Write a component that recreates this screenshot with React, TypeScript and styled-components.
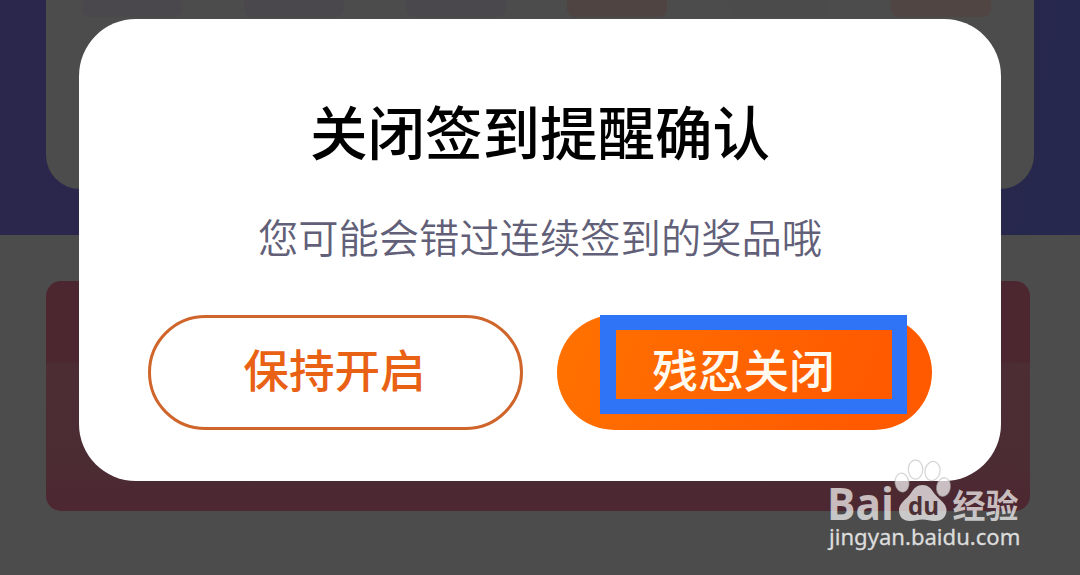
import React from "react";
import styled, { createGlobalStyle } from "styled-components";

const DimmedPageColor = "#4c4c4c";
const FontStack = `"Noto Sans CJK SC", "Noto Sans", sans-serif`;

const GlobalStyle = createGlobalStyle`
  * {
    box-sizing: border-box;
  }

  body {
    margin: 0;
    background: ${DimmedPageColor};
    font-family: ${FontStack};
    overflow: hidden;
  }
`;

const Page = styled.div`
  position: relative;
  width: 1080px;
  height: 575px;
  overflow: hidden;
  background: ${DimmedPageColor};
`;

const Header = styled.div`
  height: 235px;
  padding: 0 46px;
  background: linear-gradient(100deg, #2a264c 0%, #2a264c 55%, #27284d 100%);
`;

const CheckInCard = styled.div`
  height: 189px;
  padding: 0 43px 0 36px;
  display: flex;
  justify-content: space-between;
  background: ${DimmedPageColor};
  border-radius: 0 0 34px 34px;
`;

const Day = styled.div<{ $color: string }>`
  width: 100px;
  height: 17px;
  background: ${({ $color }) => $color};
  border-radius: 0 0 8px 8px;
`;

const Coupon = styled.div`
  width: 984px;
  height: 230px;
  margin: 46px 0 0 46px;
  border-radius: 15px;
  background: linear-gradient(
    180deg,
    #4c2730 0%,
    #4c2730 35%,
    #4b2d33 36%,
    #4c2c33 80%,
    #4d2731 100%
  );
`;

const Dialog = styled.div`
  position: absolute;
  top: 19px;
  left: 79px;
  width: 922px;
  height: 462px;
  padding: 69px 69px 0;
  background: #fff;
  border-radius: 57px;
  text-align: center;
`;

const Title = styled.h1`
  margin: 0;
  height: 84px;
  line-height: 84px;
  font-size: 57.5px;
  font-weight: 500;
  color: #000;
`;

const Message = styled.p`
  margin: 34px 0 0;
  height: 60px;
  line-height: 60px;
  font-size: 40.3px;
  font-weight: 350;
  color: #625f78;
`;

const ButtonRow = styled.div`
  margin-top: 49px;
  display: flex;
  gap: 34px;
`;

const Button = styled.button<{ $primary?: boolean }>`
  position: relative;
  width: 375px;
  height: 115px;
  padding: 0 2px 8px 0;
  border: ${({ $primary }) => ($primary ? "none" : "3px solid #d0652b")};
  border-radius: 58px;
  background: ${({ $primary }) =>
    $primary ? "linear-gradient(110deg, #ff7200, #ff5a00 80%)" : "#fff"};
  color: ${({ $primary }) => ($primary ? "#fffaf0" : "#e96114")};
  font-family: inherit;
  font-size: 45.6px;
  font-weight: 500;
  line-height: 1;
  cursor: pointer;
`;

const Highlight = styled.span`
  position: absolute;
  top: 0;
  left: 43px;
  width: 307px;
  height: 99px;
  border: 15px solid #2f74f6;
  border-left-width: 16px;
`;

const Watermark = styled.div`
  position: absolute;
  top: 456px;
  left: 826px;
  width: 198px;

  svg {
    display: block;
    overflow: visible;
  }
`;

const SiteAddress = styled.div`
  margin: -1px 0 0 3px;
  font-family: "Noto Sans", sans-serif;
  font-size: 22.1px;
  line-height: 30px;
  white-space: nowrap;
  color: #dcdcdc;
  -webkit-text-stroke: 0.3px #dcdcdc;
`;

const days = ["#4a484d", "#4a484d", "#4a484d", "#504442", "#4c4b4c", "#504542"];

const App = () => {
  return (
    <Page>
      <GlobalStyle />
      <Header>
        <CheckInCard>
          {days.map((color, index) => (
            <Day key={index} $color={color} />
          ))}
        </CheckInCard>
      </Header>
      <Coupon />
      <Dialog>
        <Title>关闭签到提醒确认</Title>
        <Message>您可能会错过连续签到的奖品哦</Message>
        <ButtonRow>
          <Button>保持开启</Button>
          <Button $primary>
            残忍关闭
            <Highlight />
          </Button>
        </ButtonRow>
      </Dialog>
      <Watermark>
        <svg width="198" height="66" viewBox="826 456 198 66">
          <g fill="#fff" fillOpacity="0.7">
            <text
              x="827"
              y="519.5"
              textLength="67"
              lengthAdjust="spacingAndGlyphs"
              fontFamily="Open Sans"
              fontWeight="700"
              fontSize="44"
            >
              Bai
            </text>
            <g stroke="#bbb" strokeOpacity="0.6" strokeWidth="1.3">
              <ellipse cx="902" cy="482.5" rx="6.8" ry="9.5" transform="rotate(-8 902 482.5)" />
              <ellipse cx="915.5" cy="469.5" rx="7.2" ry="9.7" />
              <ellipse cx="932.5" cy="471" rx="7.5" ry="9.6" transform="rotate(12 932.5 471)" />
              <ellipse cx="943.5" cy="487" rx="6.7" ry="9.3" transform="rotate(10 943.5 487)" />
            </g>
            <path d="M922.5 485C928 485 931 488 934 493C938 499 947 503 946.5 511C946 518 941 521 935 521C930 521 927 519.5 922.5 519.5C918 519.5 915 521 910 521C903 521 899 517 899 510C899 503 906 500 911 493C914 488 917 485 922.5 485Z" />
            <text
              x="952.5"
              y="517.5"
              textLength="66"
              lengthAdjust="spacingAndGlyphs"
              fontFamily="Noto Sans CJK SC"
              fontWeight="700"
              fontSize="33"
            >
              经验
            </text>
          </g>
          <text
            x="908"
            y="514.5"
            textLength="31"
            lengthAdjust="spacingAndGlyphs"
            fontFamily="Open Sans"
            fontWeight="700"
            fontSize="25"
            fill="#4c3035"
          >
            du
          </text>
        </svg>
        <SiteAddress>jingyan.baidu.com</SiteAddress>
      </Watermark>
    </Page>
  );
};

export default App;
